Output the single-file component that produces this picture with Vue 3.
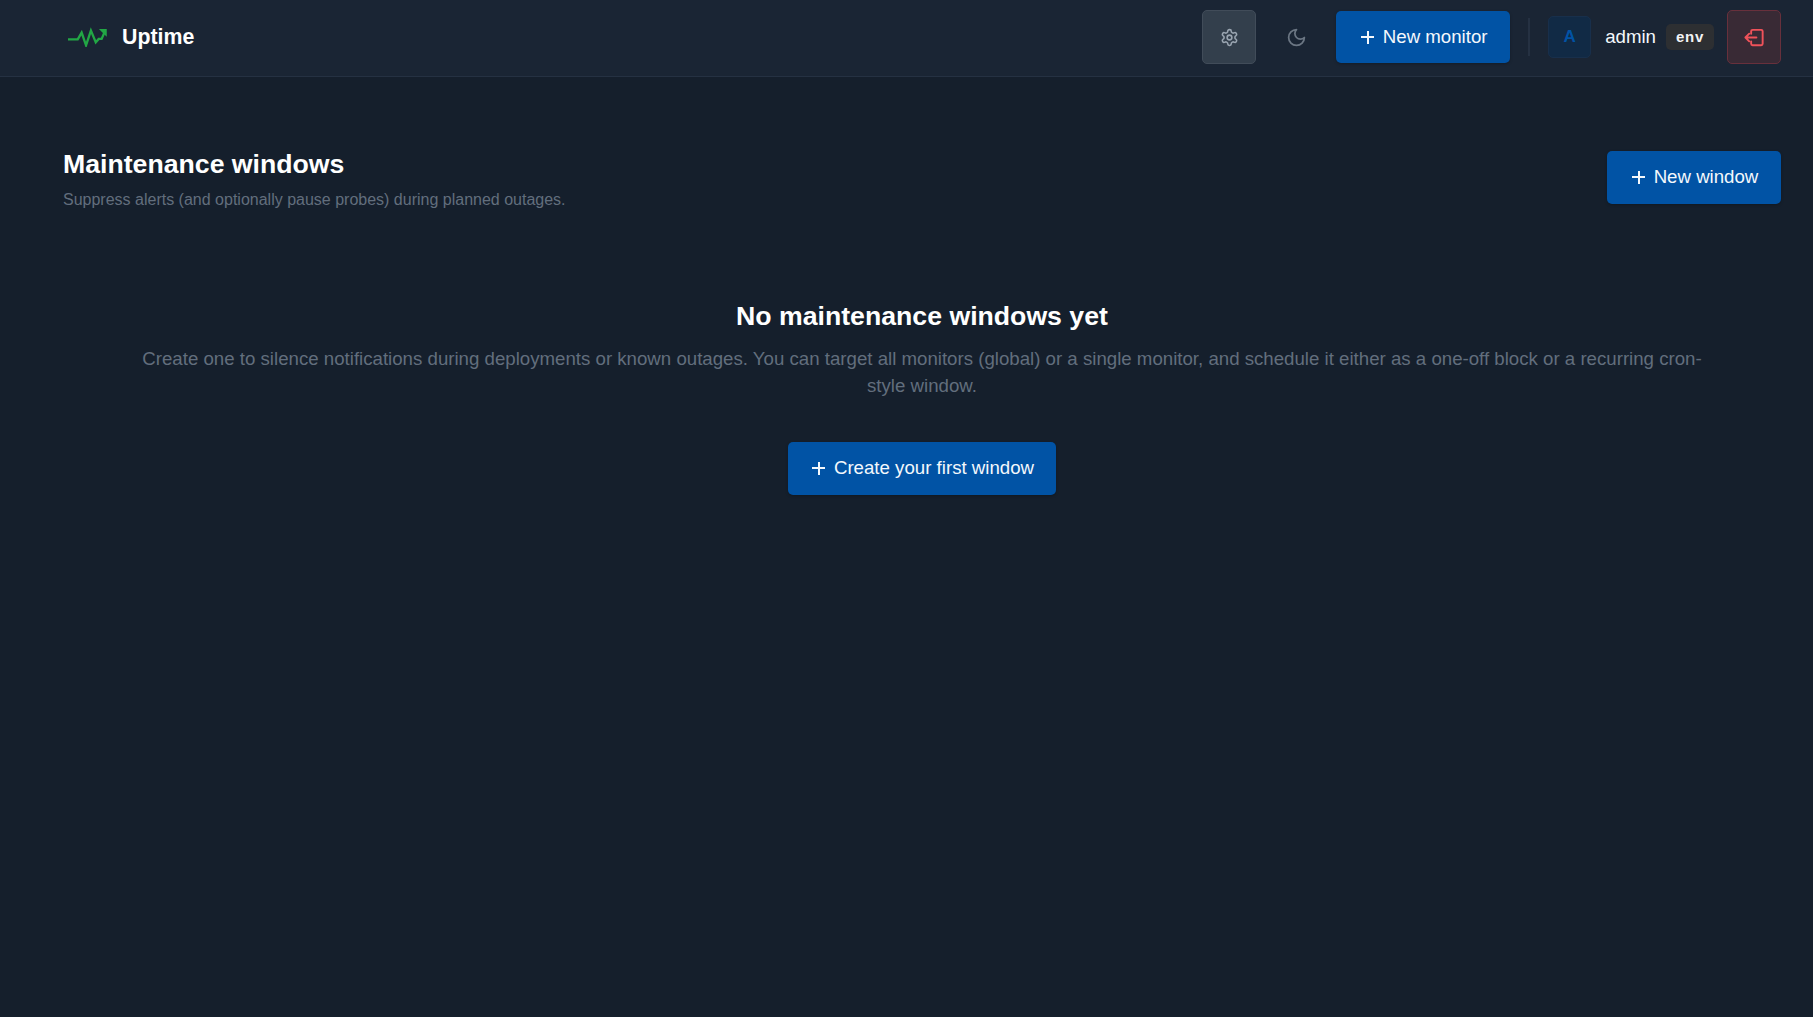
<template>
  <div class="page">
    <header class="topbar">
      <div class="brand">
        <svg class="brand-icon" viewBox="0 0 40 20" fill="none" stroke="#22a745" stroke-width="2.4" stroke-linejoin="miter">
          <path d="M0 12.5h10l4-7 4.500 13 5-15 5 12 3-3.500h3l3-7" />
          <path d="M33.500 2.500h5.500v5.500z" fill="#22a745" stroke-width="1.500" />
        </svg>
        <span class="brand-name">Uptime</span>
      </div>
      <div class="actions">
        <button class="icon-btn active" aria-label="Settings">
          <svg viewBox="0 0 24 24" width="19" height="19" fill="none" stroke="#9aa5b1" stroke-width="2" stroke-linecap="round" stroke-linejoin="round">
            <path d="M12.220 2h-.44a2 2 0 0 0-2 2v.18a2 2 0 0 1-1 1.730l-.43.25a2 2 0 0 1-2 0l-.15-.08a2 2 0 0 0-2.730.73l-.22.38a2 2 0 0 0 .73 2.730l.15.1a2 2 0 0 1 1 1.720v.51a2 2 0 0 1-1 1.740l-.15.09a2 2 0 0 0-.73 2.730l.22.38a2 2 0 0 0 2.730.73l.15-.08a2 2 0 0 1 2 0l.43.25a2 2 0 0 1 1 1.730V20a2 2 0 0 0 2 2h.44a2 2 0 0 0 2-2v-.18a2 2 0 0 1 1-1.730l.43-.25a2 2 0 0 1 2 0l.15.08a2 2 0 0 0 2.730-.73l.22-.39a2 2 0 0 0-.73-2.730l-.15-.08a2 2 0 0 1-1-1.740v-.5a2 2 0 0 1 1-1.740l.15-.09a2 2 0 0 0 .73-2.730l-.22-.38a2 2 0 0 0-2.730-.73l-.15.08a2 2 0 0 1-2 0l-.43-.25a2 2 0 0 1-1-1.730V4a2 2 0 0 0-2-2z" />
            <circle cx="12" cy="12" r="3" />
          </svg>
        </button>
        <button class="icon-btn moon" aria-label="Theme">
          <svg viewBox="0 0 24 24" width="21" height="21" fill="none" stroke="#6b7683" stroke-width="2" stroke-linecap="round" stroke-linejoin="round">
            <path d="M12 3a6 6 0 0 0 9 9 9 9 0 1 1-9-9z" />
          </svg>
        </button>
        <button class="primary monitor-btn"><span class="plus"></span>New monitor</button>
        <span class="divider"></span>
        <div class="avatar">A</div>
        <span class="username">admin</span>
        <span class="badge">env</span>
        <button class="icon-btn logout" aria-label="Log out">
          <svg viewBox="0 0 24 24" width="23" height="23" fill="none" stroke="#f0525a" stroke-width="2" stroke-linecap="round" stroke-linejoin="round">
            <path d="M8.500 8V5.500A1.500 1.500 0 0 1 10 4h9a1.500 1.500 0 0 1 1.500 1.500v13A1.500 1.500 0 0 1 19 20h-9a1.500 1.500 0 0 1-1.500-1.500V16" />
            <path d="M14 12H2.500M6.500 8l-4 4 4 4" />
          </svg>
        </button>
      </div>
    </header>

    <main class="content">
      <section class="page-head">
        <div>
          <h1>Maintenance windows</h1>
          <p>Suppress alerts (and optionally pause probes) during planned outages.</p>
        </div>
        <button class="primary head-btn"><span class="plus"></span>New window</button>
      </section>

      <section class="empty">
        <h2>No maintenance windows yet</h2>
        <p>Create one to silence notifications during deployments or known outages. You can target all monitors (global) or a single monitor, and schedule it either as a one-off block or a recurring cron-style window.</p>
        <button class="primary"><span class="plus"></span>Create your first window</button>
      </section>
    </main>
  </div>
</template>

<script setup>
</script>

<style scoped>
.page { min-height: 1017px; background: #151f2c; color: #fff; font-family: "Liberation Sans", Arial, sans-serif; }
.topbar { box-sizing: border-box; height: 77px; display: flex; align-items: center; justify-content: space-between; padding: 0 32px 2px 68px; background: #1a2534; border-bottom: 1px solid #253142; }
.brand { display: flex; align-items: center; gap: 15px; }
.brand-icon { width: 39px; height: 20px; }
.brand-name { font-size: 21.330px; font-weight: 700; }
.actions { display: flex; align-items: center; }
button { font-family: inherit; border: 0; cursor: pointer; }
.icon-btn { width: 54px; height: 54px; display: flex; align-items: center; justify-content: center; padding: 0; background: transparent; border-radius: 5px; }
.icon-btn.active { background: #333f4c; border: 1px solid #414c59; }
.icon-btn.moon { margin-left: 13px; }
.icon-btn.logout { background: #392a35; border: 1px solid #68303c; margin-left: 13px; }
.primary { display: inline-flex; align-items: center; justify-content: center; height: 52.500px; padding: 0 22px; background: #0153a5; color: #f4f8fc; font-size: 18.670px; border-radius: 5px; box-shadow: 0 1px 3px rgba(0, 0, 0, .25); }
.monitor-btn { margin-left: 13px; width: 174px; padding: 0; }
.head-btn { margin-top: 3px; width: 174px; padding: 0; }
.plus { position: relative; width: 16px; height: 14px; margin-right: 8px; }
.plus::before, .plus::after { content: ""; position: absolute; background: #f4f8fc; }
.plus::before { left: 2px; right: 1px; top: 6px; height: 2px; }
.plus::after { top: 1px; bottom: 0; left: 8px; width: 2px; }
.divider { width: 2px; height: 38px; background: #253142; margin: 0 18px; }
.avatar { width: 43px; height: 42px; box-sizing: border-box; display: flex; align-items: center; justify-content: center; background: #112a45; border: 1px solid #182f4b; border-radius: 5px; color: #0153a5; font-size: 17px; font-weight: 700; }
.username { margin-left: 14px; font-size: 18.670px; color: #f4f8fc; }
.badge { box-sizing: border-box; margin-left: 10px; height: 26px; width: 48px; padding-bottom: 2px; display: flex; align-items: center; justify-content: center; background: #2d2f32; border-radius: 5px; color: #f3f3f3; font-size: 15px; font-weight: 700; letter-spacing: 0.800px; }
.content { padding: 71px 32px 0 63px; }
.page-head { display: flex; justify-content: space-between; align-items: flex-start; }
.page-head h1 { margin: 0; font-size: 26.670px; line-height: 32px; font-weight: 700; }
.page-head p { margin: 10px 0 0; font-size: 16px; line-height: 20px; color: #626e7d; }
.empty { margin-top: 90px; padding: 0 64px; text-align: center; }
.empty h2 { margin: 0; font-size: 26.670px; line-height: 32px; font-weight: 700; }
.empty p { margin: 13px 0 0; font-size: 18.670px; line-height: 27px; color: #626e7d; }
.empty .primary { margin-top: 43px; }
</style>
